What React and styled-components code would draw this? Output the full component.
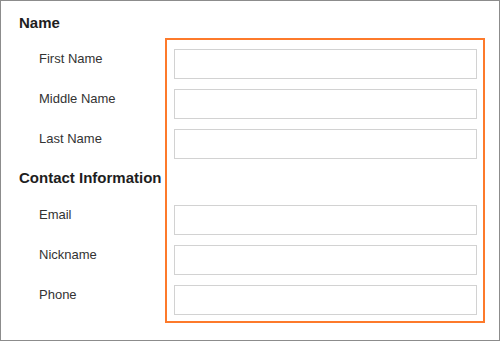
import styled, { createGlobalStyle } from "styled-components"

const GlobalStyle = createGlobalStyle`
    html, body {
        margin: 0;
        padding: 0;
        background: #fff;
    }
    * {
        box-sizing: border-box;
    }
`

const Frame = styled.div`
    width: 500px;
    height: 341px;
    border: 1px solid #8c8c8c;
    padding: 13px 0 0 18px;
    background: #fff;
    font-family: "Liberation Sans", Arial, Helvetica, sans-serif;
`

const Heading = styled.h2`
    margin: 0 0 6px;
    font-size: 15px;
    line-height: 18px;
    font-weight: bold;
    color: #1e1e1e;
`

const Grid = styled.div`
    display: grid;
    grid-template-columns: 146px 320px;
    grid-template-rows: 6px repeat(3, 40px) 36px repeat(3, 40px) 3px;
`

const Highlight = styled.div`
    grid-column: 2;
    grid-row: 1 / -1;
    border: 2px solid #fd7a2b;
`

const Label = styled.label`
    grid-column: 1;
    grid-row: ${(p) => p.$row};
    align-self: start;
    padding: 7px 0 0 20px;
    font-size: 13px;
    line-height: 16px;
    color: #333;
`

const SubHeading = styled.h3`
    grid-column: 1;
    grid-row: ${(p) => p.$row};
    align-self: start;
    margin: 0;
    padding-top: 5px;
    font-size: 15px;
    line-height: 18px;
    font-weight: bold;
    color: #1e1e1e;
    white-space: nowrap;
`

const Input = styled.input`
    grid-column: 2;
    grid-row: ${(p) => p.$row};
    align-self: center;
    margin: 0 8px 0 9px;
    height: 30px;
    border: 1px solid #d2d2d2;
    border-radius: 0;
    background: #fff;
    outline: none;
`

const fields = [
    { label: "First Name", row: 2 },
    { label: "Middle Name", row: 3 },
    { label: "Last Name", row: 4 },
    { label: "Email", row: 6 },
    { label: "Nickname", row: 7 },
    { label: "Phone", row: 8 },
]

const App = () => {
    return (
        <>
            <GlobalStyle />
            <Frame>
                <Heading>Name</Heading>
                <Grid>
                    <Highlight />
                    <SubHeading $row={5}>Contact Information</SubHeading>
                    {fields.map((f) => (
                        <Label key={f.label} $row={f.row}>{f.label}</Label>
                    ))}
                    {fields.map((f) => (
                        <Input key={f.label} $row={f.row} type="text" />
                    ))}
                </Grid>
            </Frame>
        </>
    )
}

export default App
